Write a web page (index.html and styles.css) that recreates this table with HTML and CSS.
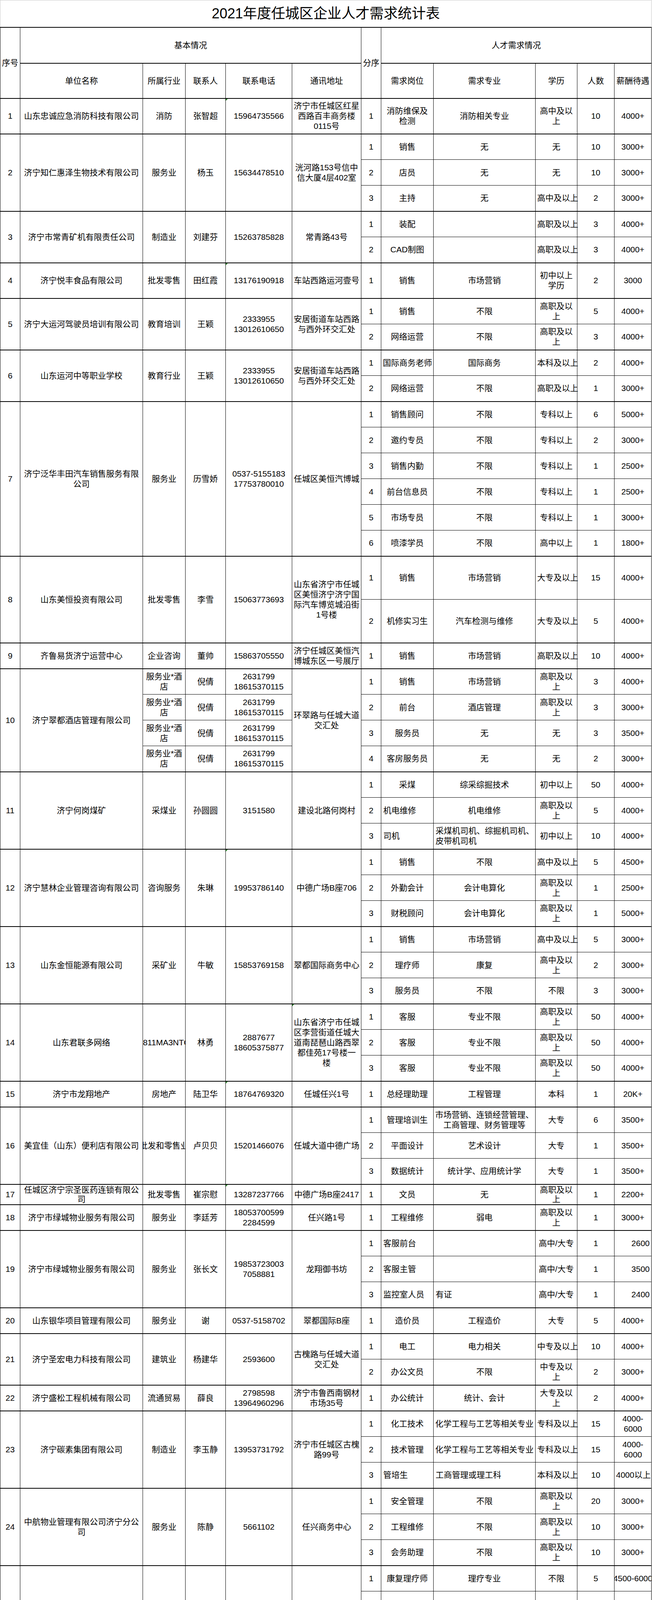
FILE: index.html
```html
<!DOCTYPE html>
<html lang="zh-CN">
<head>
<meta charset="utf-8">
<title>2021年度任城区企业人才需求统计表</title>
<link rel="stylesheet" href="styles.css">
</head>
<body>
<table class="sheet">
<colgroup>
<col class="c-no"><col class="c-name"><col class="c-ind"><col class="c-person"><col class="c-phone"><col class="c-addr">
<col class="c-sub"><col class="c-post"><col class="c-major"><col class="c-edu"><col class="c-num"><col class="c-pay">
</colgroup>
<tbody>
<tr class="r70"><td colspan="12" class="title">2021年度任城区企业人才需求统计表</td></tr>
<tr class="r92 top"><td rowspan="2">序号</td><td colspan="5">基本情况</td><td rowspan="2">分序</td><td colspan="5">人才需求情况</td></tr>
<tr class="r90 top"><td>单位名称</td><td>所属行业</td><td>联系人</td><td>联系电话</td><td>通讯地址</td><td>需求岗位</td><td>需求专业</td><td>学历</td><td>人数</td><td>薪酬待遇</td></tr>

<tr class="r91 top"><td>1</td><td>山东忠诚应急消防科技有限公司</td><td>消防</td><td>张智超</td><td class="flag">15964735566</td><td>济宁市任城区红星<br>西路百丰商务楼<br>0115号</td><td>1</td><td>消防维保及<br>检测</td><td>消防相关专业</td><td>高中及以<br>上</td><td>10</td><td>4000+</td></tr>

<tr class="top"><td rowspan="3">2</td><td rowspan="3">济宁知仁惠泽生物技术有限公司</td><td rowspan="3">服务业</td><td rowspan="3">杨玉</td><td rowspan="3">15634478510</td><td rowspan="3">洸河路153号信中<br>信大厦4层402室</td><td>1</td><td>销售</td><td>无</td><td>无</td><td>10</td><td>3000+</td></tr>
<tr><td>2</td><td>店员</td><td>无</td><td>无</td><td>10</td><td>3000+</td></tr>
<tr><td>3</td><td>主持</td><td>无</td><td>高中及以上</td><td>2</td><td>3000+</td></tr>

<tr class="top"><td rowspan="2">3</td><td rowspan="2">济宁市常青矿机有限责任公司</td><td rowspan="2">制造业</td><td rowspan="2">刘建芬</td><td rowspan="2">15263785828</td><td rowspan="2">常青路43号</td><td>1</td><td>装配</td><td></td><td>高职及以上</td><td>3</td><td>4000+</td></tr>
<tr><td>2</td><td>CAD制图</td><td></td><td>高职及以上</td><td>3</td><td>4000+</td></tr>

<tr class="r91 top"><td>4</td><td>济宁悦丰食品有限公司</td><td>批发零售</td><td>田红霞</td><td class="flag">13176190918</td><td>车站西路运河壹号</td><td>1</td><td>销售</td><td>市场营销</td><td>初中以上<br>学历</td><td>2</td><td>3000</td></tr>

<tr class="top"><td rowspan="2">5</td><td rowspan="2">济宁大运河驾驶员培训有限公司</td><td rowspan="2">教育培训</td><td rowspan="2">王颖</td><td rowspan="2">2333955<br>13012610650</td><td rowspan="2">安居街道车站西路<br>与西外环交汇处</td><td>1</td><td>销售</td><td>不限</td><td>高职及以<br>上</td><td>5</td><td>4000+</td></tr>
<tr><td>2</td><td>网络运营</td><td>不限</td><td>高职及以<br>上</td><td>3</td><td>4000+</td></tr>

<tr class="top"><td rowspan="2">6</td><td rowspan="2">山东运河中等职业学校</td><td rowspan="2">教育行业</td><td rowspan="2">王颖</td><td rowspan="2">2333955<br>13012610650</td><td rowspan="2">安居街道车站西路<br>与西外环交汇处</td><td>1</td><td>国际商务老师</td><td>国际商务</td><td>本科及以上</td><td>2</td><td>4000+</td></tr>
<tr><td>2</td><td>网络运营</td><td>不限</td><td>高职及以上</td><td>1</td><td>3000+</td></tr>

<tr class="top"><td rowspan="6">7</td><td rowspan="6">济宁泛华丰田汽车销售服务有限<br>公司</td><td rowspan="6">服务业</td><td rowspan="6">历雪娇</td><td rowspan="6">0537-5155183<br>17753780010</td><td rowspan="6">任城区美恒汽博城</td><td>1</td><td>销售顾问</td><td>不限</td><td>专科以上</td><td>6</td><td>5000+</td></tr>
<tr><td>2</td><td>邀约专员</td><td>不限</td><td>专科以上</td><td>2</td><td>3000+</td></tr>
<tr><td>3</td><td>销售内勤</td><td>不限</td><td>专科以上</td><td>1</td><td>2500+</td></tr>
<tr><td>4</td><td>前台信息员</td><td>不限</td><td>专科以上</td><td>1</td><td>2500+</td></tr>
<tr><td>5</td><td>市场专员</td><td>不限</td><td>专科以上</td><td>1</td><td>3000+</td></tr>
<tr><td>6</td><td>喷漆学员</td><td>不限</td><td>高中以上</td><td>1</td><td>1800+</td></tr>

<tr class="r111 top"><td rowspan="2">8</td><td rowspan="2">山东美恒投资有限公司</td><td rowspan="2">批发零售</td><td rowspan="2">李雪</td><td rowspan="2">15063773693</td><td rowspan="2">山东省济宁市任城<br>区美恒济宁济宁国<br>际汽车博览城沿街<br>1号楼</td><td>1</td><td>销售</td><td>市场营销</td><td>大专及以上</td><td>15</td><td>4000+</td></tr>
<tr class="r111"><td>2</td><td>机修实习生</td><td>汽车检测与维修</td><td>大专及以上</td><td>5</td><td>4000+</td></tr>

<tr class="top"><td>9</td><td>齐鲁易货济宁运营中心</td><td>企业咨询</td><td>董帅</td><td>15863705550</td><td>济宁任城区美恒汽<br>博城东区一号展厅</td><td>1</td><td>销售</td><td>市场营销</td><td>高职及以上</td><td>10</td><td>4000+</td></tr>

<tr class="top"><td rowspan="4">10</td><td rowspan="4">济宁翠都酒店管理有限公司</td><td>服务业*酒<br>店</td><td>倪倩</td><td>2631799<br>18615370115</td><td rowspan="4">环翠路与任城大道<br>交汇处</td><td>1</td><td>销售</td><td>市场营销</td><td>高职及以<br>上</td><td>3</td><td>4000+</td></tr>
<tr><td>服务业*酒<br>店</td><td>倪倩</td><td>2631799<br>18615370115</td><td>2</td><td>前台</td><td>酒店管理</td><td>高职及以<br>上</td><td>3</td><td>3000+</td></tr>
<tr><td>服务业*酒<br>店</td><td>倪倩</td><td>2631799<br>18615370115</td><td>3</td><td>服务员</td><td>无</td><td>无</td><td>3</td><td>3500+</td></tr>
<tr><td>服务业*酒<br>店</td><td>倪倩</td><td>2631799<br>18615370115</td><td>4</td><td>客房服务员</td><td>无</td><td>无</td><td>2</td><td>3000+</td></tr>

<tr class="top"><td rowspan="3">11</td><td rowspan="3">济宁何岗煤矿</td><td rowspan="3">采煤业</td><td rowspan="3">孙圆圆</td><td rowspan="3">3151580</td><td rowspan="3">建设北路何岗村</td><td>1</td><td>采煤</td><td>综采综掘技术</td><td>初中以上</td><td>50</td><td>4000+</td></tr>
<tr><td>2</td><td class="l">机电维修</td><td>机电维修</td><td>高职及以<br>上</td><td>5</td><td>4000+</td></tr>
<tr><td>3</td><td class="l">司机</td><td class="l">采煤机司机、综掘机司机、<br>皮带机司机</td><td>初中以上</td><td>10</td><td>4000+</td></tr>

<tr class="top"><td rowspan="3">12</td><td rowspan="3">济宁慧林企业管理咨询有限公司</td><td rowspan="3">咨询服务</td><td rowspan="3">朱琳</td><td rowspan="3" class="flag">19953786140</td><td rowspan="3">中德广场B座706</td><td>1</td><td>销售</td><td>不限</td><td>高中及以上</td><td>5</td><td>4500+</td></tr>
<tr><td>2</td><td>外勤会计</td><td>会计电算化</td><td>高职及以<br>上</td><td>1</td><td>2500+</td></tr>
<tr><td>3</td><td>财税顾问</td><td>会计电算化</td><td>高职及以<br>上</td><td>1</td><td>5000+</td></tr>

<tr class="top"><td rowspan="3">13</td><td rowspan="3">山东金恒能源有限公司</td><td rowspan="3">采矿业</td><td rowspan="3">牛敏</td><td rowspan="3">15853769158</td><td rowspan="3">翠都国际商务中心</td><td>1</td><td>销售</td><td>市场营销</td><td>高中及以上</td><td>5</td><td>3000+</td></tr>
<tr><td>2</td><td>理疗师</td><td>康复</td><td>高中及以<br>上</td><td>2</td><td>3000+</td></tr>
<tr><td>3</td><td>服务员</td><td>不限</td><td>不限</td><td>3</td><td>3000+</td></tr>

<tr class="top"><td rowspan="3">14</td><td rowspan="3">山东君联多网络</td><td rowspan="3" class="cl"><div class="clip">0811MA3NTC</div></td><td rowspan="3">林勇</td><td rowspan="3">2887677<br>18605375877</td><td rowspan="3" class="flag">山东省济宁市任城<br>区李营街道任城大<br>道南琵琶山路西翠<br>都佳苑17号楼一<br>楼</td><td>1</td><td>客服</td><td>专业不限</td><td>高职及以<br>上</td><td>50</td><td>4000+</td></tr>
<tr><td>2</td><td>客服</td><td>专业不限</td><td>高职及以<br>上</td><td>50</td><td>4000+</td></tr>
<tr><td>3</td><td>客服</td><td>专业不限</td><td>高职及以<br>上</td><td>50</td><td>4000+</td></tr>

<tr class="top"><td>15</td><td>济宁市龙翔地产</td><td>房地产</td><td>陆卫华</td><td class="flag">18764769320</td><td>任城任兴1号</td><td>1</td><td>总经理助理</td><td>工程管理</td><td>本科</td><td>1</td><td>20K+</td></tr>

<tr class="top"><td rowspan="3">16</td><td rowspan="3">美宜佳（山东）便利店有限公司</td><td rowspan="3" class="cl"><div class="clip">批发和零售业</div></td><td rowspan="3">卢贝贝</td><td rowspan="3">15201466076</td><td rowspan="3">任城大道中德广场</td><td>1</td><td>管理培训生</td><td>市场营销、连锁经营管理、<br>工商管理、财务管理等</td><td>大专</td><td>6</td><td>3500+</td></tr>
<tr><td>2</td><td>平面设计</td><td>艺术设计</td><td>大专</td><td>1</td><td>3500+</td></tr>
<tr><td>3</td><td>数据统计</td><td>统计学、应用统计学</td><td>大专</td><td>1</td><td>3500+</td></tr>

<tr class="r52 top"><td>17</td><td>任城区济宁宗圣医药连锁有限公<br>司</td><td>批发零售</td><td>崔宗慰</td><td class="flag">13287237766</td><td>中德广场B座2417</td><td>1</td><td>文员</td><td>无</td><td>高职及以<br>上</td><td>1</td><td>2200+</td></tr>

<tr class="top"><td>18</td><td>济宁市绿城物业服务有限公司</td><td>服务业</td><td>李廷芳</td><td>18053700599<br>2284599</td><td>任兴路1号</td><td>1</td><td>工程维修</td><td>弱电</td><td>高职及以<br>上</td><td>1</td><td>3000+</td></tr>

<tr class="top"><td rowspan="3">19</td><td rowspan="3">济宁市绿城物业服务有限公司</td><td rowspan="3">服务业</td><td rowspan="3">张长文</td><td rowspan="3">19853723003<br>7058881</td><td rowspan="3">龙翔御书坊</td><td>1</td><td class="l">客服前台</td><td></td><td>高中/大专</td><td>1</td><td class="r">2600</td></tr>
<tr><td>2</td><td class="l">客服主管</td><td></td><td>高中/大专</td><td>1</td><td class="r">3500</td></tr>
<tr><td>3</td><td class="l">监控室人员</td><td class="l">有证</td><td>高中/大专</td><td>1</td><td class="r">2400</td></tr>

<tr class="top"><td>20</td><td>山东银华项目管理有限公司</td><td>服务业</td><td>谢</td><td>0537-5158702</td><td>翠都国际B座</td><td>1</td><td>造价员</td><td>工程造价</td><td>大专</td><td>5</td><td>4000+</td></tr>

<tr class="top"><td rowspan="2">21</td><td rowspan="2">济宁圣宏电力科技有限公司</td><td rowspan="2">建筑业</td><td rowspan="2">杨建华</td><td rowspan="2">2593600</td><td rowspan="2">古槐路与任城大道<br>交汇处</td><td>1</td><td>电工</td><td>电力相关</td><td>中专及以上</td><td>10</td><td>4000+</td></tr>
<tr><td>2</td><td>办公文员</td><td>不限</td><td>中专及以<br>上</td><td>2</td><td>3000+</td></tr>

<tr class="top"><td>22</td><td>济宁盛松工程机械有限公司</td><td>流通贸易</td><td>薛良</td><td>2798598<br>13964960296</td><td>济宁市鲁西南钢材<br>市场35号</td><td>1</td><td>办公统计</td><td>统计、会计</td><td>大专及以<br>上</td><td>2</td><td>4000+</td></tr>

<tr class="top"><td rowspan="3">23</td><td rowspan="3">济宁碳素集团有限公司</td><td rowspan="3">制造业</td><td rowspan="3">李玉静</td><td rowspan="3">13953731792</td><td rowspan="3">济宁市任城区古槐<br>路99号</td><td>1</td><td>化工技术</td><td>化学工程与工艺等相关专业</td><td>专科及以上</td><td>15</td><td>4000-<br>6000</td></tr>
<tr><td>2</td><td>技术管理</td><td>化学工程与工艺等相关专业</td><td>专科及以上</td><td>15</td><td>4000-<br>6000</td></tr>
<tr><td>3</td><td class="l">管培生</td><td class="l">工商管理或理工科</td><td>本科及以上</td><td>10</td><td>4000以上</td></tr>

<tr class="top"><td rowspan="3">24</td><td rowspan="3">中航物业管理有限公司济宁分公<br>司</td><td rowspan="3">服务业</td><td rowspan="3">陈静</td><td rowspan="3">5661102</td><td rowspan="3">任兴商务中心</td><td>1</td><td>安全管理</td><td>不限</td><td>高职及以<br>上</td><td>20</td><td>3000+</td></tr>
<tr><td>2</td><td>工程维修</td><td>不限</td><td>高职及以<br>上</td><td>10</td><td>3000+</td></tr>
<tr><td>3</td><td>会务助理</td><td>不限</td><td>高职及以<br>上</td><td>10</td><td>3000+</td></tr>

<tr class="top"><td rowspan="5">25</td><td rowspan="5">济宁任城瑞康医院</td><td rowspan="5">医院</td><td rowspan="5">曹院长</td><td rowspan="5">13675377177</td><td rowspan="5">济宁市金宇西路<br>47号</td><td>1</td><td>康复理疗师</td><td>理疗专业</td><td>不限</td><td>5</td><td class="cl"><div class="clip">4500-6000</div></td></tr>
<tr><td>2</td><td>检验师</td><td>检验专业</td><td class="l">大专以上</td><td>2</td><td>面议</td></tr>
<tr><td>3</td><td class="l">按摩师</td><td></td><td class="l">大专以上</td><td>5</td><td>面议</td></tr>
<tr><td>4</td><td class="l">护士</td><td class="l">护理专业</td><td class="l">大专以上</td><td>8</td><td class="cl"><div class="clip">2000-3000</div></td></tr>
<tr><td>5</td><td class="l">影像师</td><td class="l">影像专业</td><td class="l">大专以上</td><td>2</td><td>面议</td></tr>

<tr class="top"><td rowspan="2">26</td><td rowspan="2">济宁环球港商业管理有限公司</td><td rowspan="2">商业服务</td><td rowspan="2">蔡一览</td><td rowspan="2">18595208550</td><td rowspan="2">任城区龙行路东首<br>来鹤商城银座楼</td><td>1</td><td>招商营运</td><td>经济管理、市场营销等相关<br>专业</td><td>大专及以上</td><td>8</td><td>4000+</td></tr>
<tr><td>2</td><td>物业经理</td><td>土木工程、消防、安全管理<br>等</td><td>大专及以上</td><td>2</td><td>6000+</td></tr>

<tr class="top"><td rowspan="3">27</td><td rowspan="3">济宁全圣美商贸有限公司</td><td rowspan="3">商业服务</td><td rowspan="3">蔡一览</td><td rowspan="3">18595208550</td><td rowspan="3">任城区龙行路东首<br>来鹤商城银座楼</td><td>1</td><td class="l">超市店长</td><td>经济管理、市场营销等相关<br>专业</td><td>大专及以上</td><td>1</td><td>6000+</td></tr>
<tr><td>2</td><td class="l">便利店店长</td><td>经济管理、市场营销等相关<br>专业</td><td>中专及以上</td><td>2</td><td>4500+</td></tr>
<tr><td>3</td><td class="l">理货员</td><td class="l">不限</td><td>初中及以上</td><td>8</td><td>2500+</td></tr>

<tr class="top"><td rowspan="2">28</td><td rowspan="2">合众人寿保险股份有限公司济宁<br>中心支公司</td><td rowspan="2">金融保险</td><td rowspan="2">沈洪波</td><td rowspan="2">18905378612<br>/3202000</td><td rowspan="2">济宁市任城路8号<br>瑞发商务楼三楼</td><td>1</td><td>内勤管理</td><td>非艺体类，其他专业均可</td><td>全日制本<br>科</td><td>2</td><td>4500</td></tr>
<tr><td>2</td><td>县区管理人<br>员</td><td>市场营销</td><td>本科</td><td>1</td><td>8500</td></tr>

<tr class="top"><td>29</td><td>济宁诚信彩印科技有限公司</td><td>纸质印刷<br>业</td><td>周星辰</td><td>15963766539</td><td>济宁任城区王母阁<br>路118号</td><td>1</td><td>销售</td><td>印刷</td><td>大专及以<br>上</td><td>10</td><td>4000+</td></tr>

<tr class="top"><td rowspan="4">30</td><td rowspan="4">济宁蔬菜批发市场有限责任公司</td><td rowspan="4">流通服务业</td><td rowspan="4">魏绍春</td><td rowspan="4" class="flag">18766888578</td><td rowspan="4" class="flag">安居街道</td><td>1</td><td>会计</td><td class="l">不限</td><td>大专以上</td><td>4</td><td>面议</td></tr>
<tr><td>2</td><td>文员</td><td class="l">不限</td><td>本科</td><td>3</td><td>面议</td></tr>
<tr><td>3</td><td>政工</td><td class="l">不限</td><td>本科</td><td>3</td><td>面议</td></tr>
<tr><td>4</td><td class="l">超市收银员</td><td class="l">不限</td><td>高中以上</td><td>6</td><td>3000元</td></tr>

<tr class="top"><td rowspan="3">31</td><td rowspan="3">山东爱福地生物股份有限公司</td><td rowspan="3">生产制造业</td><td rowspan="3">张芮</td><td rowspan="3">13854766706</td><td rowspan="3">任城区喻屯镇经济<br>园区</td><td>1</td><td>市场总监</td><td>市场营销</td><td>专科以上</td><td>1</td><td>8000+</td></tr>
<tr><td>2</td><td>财务经理</td><td>财务管理、会计学</td><td>专科以上</td><td>1</td><td>7000+</td></tr>
<tr><td>3</td><td class="l">机修工</td><td class="l">机械维修</td><td class="l">大专以上</td><td>2</td><td class="l">5000+</td></tr>

<tr class="top"><td rowspan="4">32</td><td rowspan="4">山东圣鹏科技股份有限公司</td><td rowspan="4">农药制造</td><td rowspan="4">卞曙光</td><td rowspan="4" class="flag">13475750433</td><td rowspan="4">济宁市任城区喻屯<br>镇经济园区</td><td>1</td><td>安全总监</td><td>化工工程</td><td>大专以上<br>学历</td><td>1</td><td>5500以上</td></tr>
<tr><td>2</td><td>技术总监</td><td>化工工程</td><td>大专以上<br>学历</td><td>1</td><td>5500以上</td></tr>
<tr><td>3</td><td>肥料化验员</td><td>化工</td><td>大专以上<br>学历</td><td>1</td><td>3800以上</td></tr>
<tr><td>4</td><td>人力资源部<br>长</td><td>人力资源</td><td>大专以上<br>学历</td><td>1</td><td>4500以上</td></tr>
</tbody>
</table>
</body>
</html>
```

FILE: styles.css
```css
html, body {
  margin: 0;
  padding: 0;
  background: #ffffff;
}

.sheet {
  border-collapse: collapse;
  table-layout: fixed;
  width: 1667px;
  font-family: "Liberation Sans", "Noto Sans CJK SC", sans-serif;
  font-size: 21px;
  line-height: 26px;
  color: #000000;
}

.c-no { width: 51px; }
.c-name { width: 314px; }
.c-ind { width: 109px; }
.c-person { width: 103px; }
.c-phone { width: 170px; }
.c-addr { width: 177px; }
.c-sub { width: 51px; }
.c-post { width: 134px; }
.c-major { width: 261px; }
.c-edu { width: 107px; }
.c-num { width: 95px; }
.c-pay { width: 95px; }

.sheet tr { height: 66px; }
.sheet tr.r70 { height: 69px; }
.sheet tr.r92 { height: 92px; }
.sheet tr.r90 { height: 90px; }
.sheet tr.r91 { height: 91px; }
.sheet tr.r111 { height: 111px; }
.sheet tr.r52 { height: 52px; }
.sheet tr.r52 > td { line-height: 24px; }

.sheet td {
  border: 1px solid #000000;
  padding: 0 4px;
  text-align: center;
  vertical-align: middle;
  white-space: nowrap;
}

.sheet tr.top > td {
  border-top: 2px solid #000000;
}

.sheet td.title {
  border-top: 1px solid #c9c9c9;
  border-left: 1px solid #c9c9c9;
  border-right: 1px solid #c9c9c9;
  font-size: 36px;
  line-height: 44px;
  text-align: center;
}

.sheet td.l { text-align: left; padding-left: 5px; }
.sheet td.r { text-align: right; padding-right: 4px; }

.sheet td.cl { padding: 0; }

.clip {
  display: flex;
  justify-content: center;
  overflow: hidden;
  white-space: nowrap;
}

.sheet td.flag { position: relative; }

.sheet td.flag::before {
  content: "";
  position: absolute;
  top: 0;
  left: 0;
  width: 0;
  height: 0;
  border-top: 5px solid #2a8a2a;
  border-right: 5px solid transparent;
}
```
